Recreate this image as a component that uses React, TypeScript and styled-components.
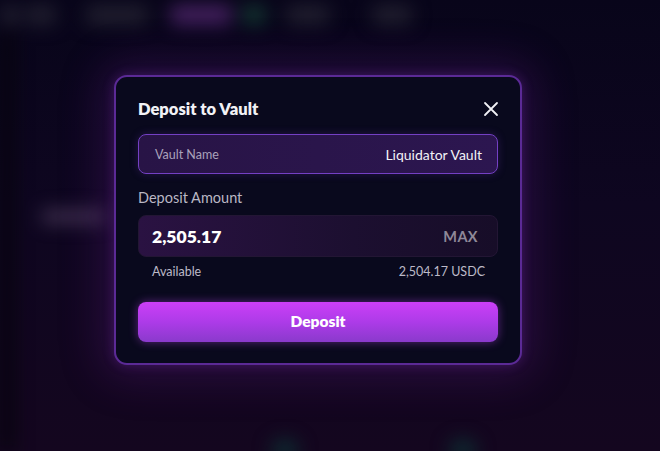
import React from "react";
import styled, { createGlobalStyle } from "styled-components";

const GlobalStyle = createGlobalStyle`
  html, body { margin: 0; padding: 0; height: 100%; background: #0a0618; }
  body { font-family: Lato, Inter, "Noto Sans", sans-serif; overflow: hidden; }
  #root { height: 100%; }
  * { box-sizing: border-box; }
`;

const Page = styled.div`
  position: relative;
  width: 660px;
  height: 451px;
  overflow: hidden;
  background: linear-gradient(180deg, #08051a 0%, #0e0620 45%, #14061f 100%);
`;

const Backdrop = styled.div`
  height: 100%;
  display: flex;
  flex-direction: column;
  filter: blur(9px);
`;

const NavBar = styled.div`
  height: 30px;
  display: flex;
  align-items: center;
`;

const NavPill = styled.div<{ $w: number; $ml: number; $tone?: "purple" | "green" | "gray" }>`
  width: ${(p) => p.$w}px;
  margin-left: ${(p) => p.$ml}px;
  height: 20px;
  border-radius: 6px;
  background: ${(p) =>
    p.$tone === "purple" ? "#44205f" : p.$tone === "green" ? "#133430" : "#201e2e"};
`;

const BodyArea = styled.div`
  flex: 1;
  display: flex;
`;

const SideEdge = styled.div`
  width: 14px;
  background: #07040f;
`;

const Content = styled.div`
  flex: 1;
  padding: 180px 0 0 28px;
  display: flex;
  flex-direction: column;
  justify-content: space-between;
`;

const GhostLabel = styled.div`
  width: 64px;
  height: 13px;
  border-radius: 4px;
  background: #40304f;
`;

const GlowRow = styled.div`
  display: flex;
  gap: 150px;
  padding-left: 229px;
  transform: translateY(10px);
`;

const GreenGlow = styled.div`
  width: 28px;
  height: 22px;
  border-radius: 50%;
  background: #0e2a30;
`;

const Overlay = styled.div`
  position: absolute;
  inset: 0;
  display: flex;
  align-items: flex-start;
  justify-content: flex-start;
  padding: 75px 0 0 114px;
`;

const Modal = styled.div`
  width: 408px;
  height: 290px;
  border: 2px solid #5b2a96;
  border-radius: 13px;
  background: #09091d;
  padding: 19px 22px 0 22px;
  display: flex;
  flex-direction: column;
  box-shadow: 0 0 40px 14px rgba(110, 30, 150, 0.25), 0 0 12px rgba(140, 60, 210, 0.3);
`;

const Header = styled.div`
  height: 26px;
  display: flex;
  align-items: center;
  justify-content: space-between;
`;

const Title = styled.h2`
  margin: 0;
  font-size: 16.5px;
  font-weight: 800;
  color: #f2f2f6;
`;

const CloseButton = styled.button`
  width: 20px;
  height: 20px;
  padding: 0;
  margin-right: -3px;
  border: none;
  background: none;
  display: flex;
  align-items: center;
  justify-content: center;
  color: #f0f0f5;
  cursor: pointer;
`;

const VaultBox = styled.div`
  margin-top: 12px;
  height: 40px;
  border: 1px solid #7440c4;
  border-radius: 8px;
  background: linear-gradient(90deg, #281446 0%, #2c1650 100%);
  display: flex;
  align-items: center;
  justify-content: space-between;
  padding: 0 15px 0 16px;
  box-shadow: 0 0 8px rgba(120, 60, 200, 0.25);
`;

const VaultLabel = styled.span`
  font-size: 12.5px;
  color: #a9a2bb;
`;

const VaultValue = styled.span`
  font-size: 14px;
  color: #f2f2f6;
`;

const FieldLabel = styled.div`
  margin-top: 15px;
  height: 20px;
  font-size: 14.5px;
  color: #b9b7c4;
`;

const AmountBox = styled.div`
  margin-top: 6px;
  height: 42px;
  border: 1px solid #231634;
  border-radius: 8px;
  background: linear-gradient(90deg, #2a1242 0%, #1c0f30 60%, #170d28 100%);
  display: flex;
  align-items: center;
  justify-content: space-between;
  padding: 0 19px 0 13px;
`;

const AmountValue = styled.span`
  font-size: 17.5px;
  font-weight: 800;
  color: #ffffff;
`;

const MaxButton = styled.span`
  font-size: 14.5px;
  font-weight: 700;
  color: #8e8898;
  letter-spacing: 0.4px;
`;

const AvailableRow = styled.div`
  margin-top: 6px;
  height: 17px;
  display: flex;
  align-items: center;
  justify-content: space-between;
  padding: 0 13px 0 14px;
  font-size: 12.5px;
  color: #bdbac8;
`;

const DepositButton = styled.button`
  margin-top: 22px;
  height: 40px;
  width: 100%;
  border: none;
  border-radius: 8px;
  background: linear-gradient(180deg, #cc3ff7 0%, #ad3be8 50%, #8a3acc 100%);
  box-shadow: 0 0 10px rgba(190, 70, 240, 0.45);
  color: #ffffff;
  font-family: inherit;
  font-size: 15.5px;
  font-weight: 800;
  padding: 0 0 2px 0;
  cursor: pointer;
`;

export default function App() {
  return (
    <>
      <GlobalStyle />
      <Page>
        <Backdrop aria-hidden>
          <NavBar>
            <NavPill $w={20} $ml={0} />
            <NavPill $w={30} $ml={6} />
            <NavPill $w={62} $ml={30} />
            <NavPill $w={62} $ml={22} $tone="purple" />
            <NavPill $w={24} $ml={10} $tone="green" />
            <NavPill $w={44} $ml={20} />
            <NavPill $w={40} $ml={42} />
          </NavBar>
          <BodyArea>
            <SideEdge />
            <Content>
              <GhostLabel />
              <GlowRow>
                <GreenGlow />
                <GreenGlow />
              </GlowRow>
            </Content>
          </BodyArea>
        </Backdrop>
        <Overlay>
          <Modal role="dialog" aria-label="Deposit to Vault">
            <Header>
              <Title>Deposit to Vault</Title>
              <CloseButton aria-label="Close">
                <svg width="16" height="16" viewBox="0 0 16 16" fill="none">
                  <path d="M2 2L14 14M14 2L2 14" stroke="currentColor" strokeWidth="1.8" strokeLinecap="round" />
                </svg>
              </CloseButton>
            </Header>
            <VaultBox>
              <VaultLabel>Vault Name</VaultLabel>
              <VaultValue>Liquidator Vault</VaultValue>
            </VaultBox>
            <FieldLabel>Deposit Amount</FieldLabel>
            <AmountBox>
              <AmountValue>2,505.17</AmountValue>
              <MaxButton>MAX</MaxButton>
            </AmountBox>
            <AvailableRow>
              <span>Available</span>
              <span>2,504.17 USDC</span>
            </AvailableRow>
            <DepositButton>Deposit</DepositButton>
          </Modal>
        </Overlay>
      </Page>
    </>
  );
}
